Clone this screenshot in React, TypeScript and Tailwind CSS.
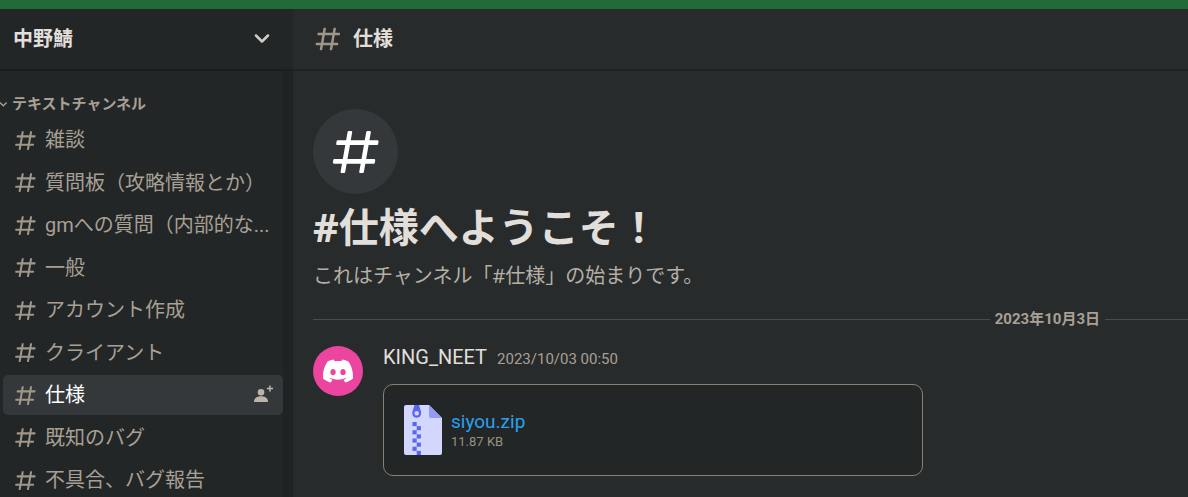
import { SiDiscord } from 'react-icons/si';

type Channel = {
  name: string;
  active?: boolean;
};

const channels: Channel[] = [
  { name: '雑談' },
  { name: '質問板（攻略情報とか）' },
  { name: 'gmへの質問（内部的な...' },
  { name: '一般' },
  { name: 'アカウント作成' },
  { name: 'クライアント' },
  { name: '仕様', active: true },
  { name: '既知のバグ' },
  { name: '不具合、バグ報告' },
];

type IconProps = {
  className?: string;
};

function HashIcon({ className }: IconProps) {
  return (
    <svg viewBox="0 0 24 24" fill="currentColor" className={className} aria-hidden="true">
      <path
        fillRule="evenodd"
        clipRule="evenodd"
        d="M5.88657 21C5.57547 21 5.3399 20.7189 5.39427 20.4126L6.00001 17H2.59511C2.28449 17 2.04905 16.7198 2.10259 16.4138L2.27759 15.4138C2.31946 15.1746 2.52722 15 2.77011 15H6.35001L7.41001 9H4.00511C3.69449 9 3.45905 8.71977 3.51259 8.41381L3.68759 7.41381C3.72946 7.17456 3.93722 7 4.18011 7H7.76001L8.39677 3.41262C8.43914 3.17391 8.64664 3 8.88907 3H9.87344C10.1845 3 10.4201 3.28107 10.3657 3.58738L9.76001 7H15.76L16.3968 3.41262C16.4391 3.17391 16.6466 3 16.8891 3H17.8734C18.1845 3 18.4201 3.28107 18.3657 3.58738L17.76 7H21.1649C21.4755 7 21.711 7.28023 21.6574 7.58619L21.4824 8.58619C21.4406 8.82544 21.2328 9 20.9899 9H17.41L16.35 15H19.7549C20.0655 15 20.301 15.2802 20.2474 15.5862L20.0724 16.5862C20.0306 16.8254 19.8228 17 19.5799 17H16L15.3632 20.5874C15.3209 20.8261 15.1134 21 14.8709 21H13.8866C13.5755 21 13.3399 20.7189 13.3943 20.4126L14 17H8.00001L7.36325 20.5874C7.32088 20.8261 7.11337 21 6.87094 21H5.88657ZM9.41045 9L8.35045 15H14.3504L15.4104 9H9.41045Z"
      />
    </svg>
  );
}

function InviteIcon({ className }: IconProps) {
  return (
    <svg viewBox="0 0 20 20" fill="currentColor" className={className} aria-hidden="true">
      <circle cx="8" cy="7.2" r="3.3" />
      <path d="M1 17c0-3.600 2.600-5.700 7-5.700s7 2.100 7 5.700z" />
      <path d="M16.200.500h1.500v2.300H20v1.400h-2.300v2.300h-1.500V4.200h-2.300V2.800h2.300z" />
    </svg>
  );
}

function ZipIcon({ className }: IconProps) {
  const teeth = [0, 1, 2, 3, 4, 5, 6, 7];
  return (
    <svg viewBox="0 0 38 50" className={className} aria-hidden="true">
      <path d="M2 0h23l13 13v35a2 2 0 0 1-2 2H2a2 2 0 0 1-2-2V2a2 2 0 0 1 2-2z" fill="#d3d6fd" />
      <path d="M25 0l13 13H27a2 2 0 0 1-2-2z" fill="#939bf9" />
      <path
        fillRule="evenodd"
        d="M10.500 0h4.500l2 6.500c.8 3.500-1.200 6.200-4.300 6.200S7.600 10 8.500 6.500zM12.700 6a2.300 2.300 0 1 0 0 4.600 2.300 2.300 0 0 0 0-4.600z"
        fill="#5865f2"
      />
      {teeth.map((i) => (
        <rect key={i} x={i % 2 === 0 ? 8.5 : 12.7} y={17 + i * 4.125} width="4.200" height="4.125" fill="#5b67e6" />
      ))}
    </svg>
  );
}

function ChannelList() {
  return (
    <ul className="flex h-[380px] shrink-0 flex-col justify-between font-['Roboto','Noto_Sans_CJK_JP',sans-serif]">
      {channels.map((channel) => (
        <li key={channel.name}>
          <a
            href="#"
            className={`flex h-10 items-center rounded-[5px] pl-[10px] pr-[10px] ${
              channel.active ? 'bg-[#34383b] text-white' : 'text-[#a8a095]'
            }`}
          >
            <HashIcon className="h-[25px] w-[25px] shrink-0 text-[#a09789]" />
            <span className="ml-[7px] min-w-0 flex-1 truncate text-[20px] leading-[30px]">{channel.name}</span>
            {channel.active && <InviteIcon className="h-5 w-5 shrink-0 text-[#bab4ab]" />}
          </a>
        </li>
      ))}
    </ul>
  );
}

function Sidebar() {
  return (
    <aside className="flex w-[293px] shrink-0 flex-col bg-[#232627]">
      <button
        type="button"
        className="flex h-[62px] shrink-0 items-center justify-between border-b-2 border-[#1b1e1e] pl-[13px] pr-[22px] text-[20px] font-bold leading-[30px] text-[#e2dfda]"
      >
        中野鯖
        <svg viewBox="0 0 18 18" className="h-[18px] w-[18px]" fill="none" stroke="#d0ccc5" aria-hidden="true">
          <path d="M3 5.500l6 6 6-6" strokeWidth="2.500" strokeLinecap="round" strokeLinejoin="round" />
        </svg>
      </button>
      <div className="flex min-h-0 flex-1">
        <nav className="flex min-w-0 flex-1 flex-col pl-[3px] pt-[21px]">
          <button type="button" className="flex h-[28px] shrink-0 items-start text-[15px] font-bold leading-[22px] text-[#a8a095]">
            <svg viewBox="0 0 10 22" className="-ml-1 h-[22px] w-[10px]" fill="none" stroke="currentColor" aria-hidden="true">
              <path d="M1 10.500l3.300 3.300L7.600 10.500" strokeWidth="1.300" />
            </svg>
            <span className="ml-[3px]">テキストチャンネル</span>
          </button>
          <ChannelList />
        </nav>
        <div className="w-[10px] shrink-0 bg-[#202324]" />
      </div>
    </aside>
  );
}

function Attachment() {
  return (
    <div className="mt-[13px] flex h-[92px] max-w-[540px] items-center rounded-[10px] border border-[#878173] bg-[#232627] px-5">
      <ZipIcon className="h-[50px] w-[38px] shrink-0" />
      <div className="ml-[9px]">
        <a href="#" className="block text-[19px] leading-[24px] text-[#2ba0ec]">
          siyou.zip
        </a>
        <p className="text-[13px] leading-[16px] text-[#98917f]">11.87 KB</p>
      </div>
    </div>
  );
}

export default function App() {
  return (
    <div className="flex h-screen flex-col overflow-hidden bg-[#282b2c] font-['Noto_Sans','Noto_Sans_CJK_JP',sans-serif]">
      <div className="h-[9px] shrink-0 bg-[#206a38]" />
      <div className="flex min-h-0 flex-1">
        <Sidebar />
        <main className="min-w-0 flex-1">
          <header className="flex h-[62px] items-center border-b-2 border-[#1f2223] pl-5">
            <HashIcon className="h-[30px] w-[30px] text-[#a09789]" />
            <h1 className="ml-[10px] text-[20px] font-bold leading-[30px] text-[#e2dfda]">仕様</h1>
          </header>

          <div className="pl-5 pt-[38px]">
            <div className="flex h-[85px] w-[85px] items-center justify-center rounded-full bg-[#34383b]">
              <HashIcon className="h-[56px] w-[56px] text-white" />
            </div>
            <h2 className="mt-2 text-[40px] font-bold leading-[50px] text-[#e2dfda]">#仕様へようこそ！</h2>
            <p className="mt-[9px] text-[20px] leading-[30px] text-[#b5afa5]">
              これはチャンネル「#仕様」の始まりです。
            </p>
          </div>

          <div className="ml-5 mt-[18px] flex items-center font-['Roboto','Noto_Sans_CJK_JP',sans-serif]">
            <div className="h-px flex-1 bg-[#4b4c47]" />
            <span className="px-[5px] text-[15px] font-bold leading-[20px] text-[#a8a095]">2023年10月3日</span>
            <div className="h-px w-[83px] bg-[#4b4c47]" />
          </div>

          <article className="flex pl-5 pt-[15px] font-['Roboto','Noto_Sans_CJK_JP',sans-serif]">
            <div className="mt-[2px] flex h-[50px] w-[50px] shrink-0 items-center justify-center rounded-full bg-[#eb459f]">
              <SiDiscord size={30} className="text-white" />
            </div>
            <div className="ml-5 min-w-0 flex-1">
              <div className="flex h-[27px] items-baseline">
                <span className="text-[20px] leading-[27px] text-[#e2dfda]">KING_NEET</span>
                <time className="ml-[10px] text-[15px] text-[#a8a095]">2023/10/03 00:50</time>
              </div>
              <Attachment />
            </div>
          </article>
        </main>
      </div>
    </div>
  );
}
